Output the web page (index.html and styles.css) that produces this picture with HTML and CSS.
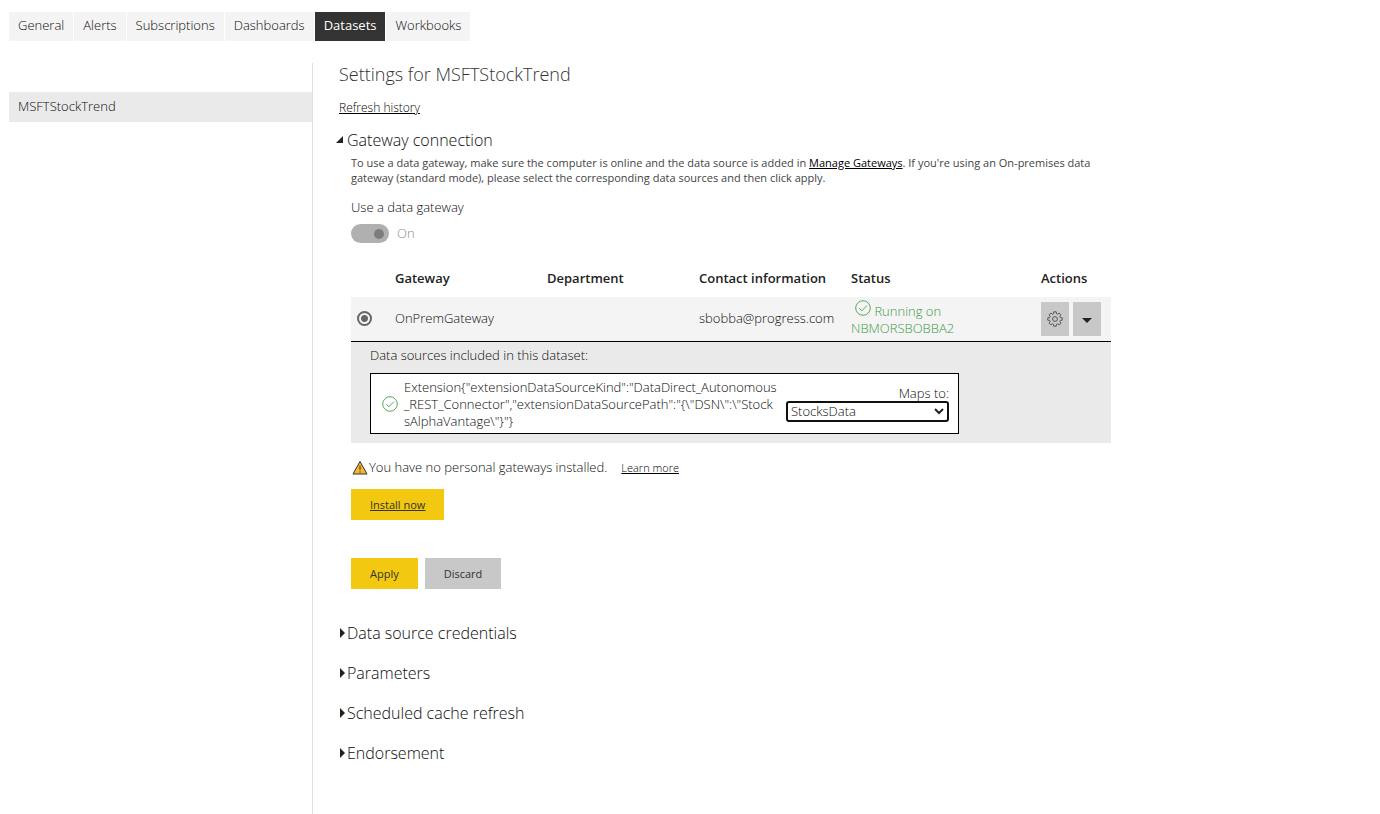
FILE: index.html
```html
<!DOCTYPE html>
<html lang="en">
<head>
  <meta charset="UTF-8">
  <meta name="viewport" content="width=device-width, initial-scale=1.0">
  <title>Settings</title>
  <link rel="stylesheet" href="styles.css">
</head>
<body>
  <nav class="tabs">
    <button type="button" class="tab">General</button>
    <button type="button" class="tab">Alerts</button>
    <button type="button" class="tab">Subscriptions</button>
    <button type="button" class="tab">Dashboards</button>
    <button type="button" class="tab active">Datasets</button>
    <button type="button" class="tab">Workbooks</button>
  </nav>

  <div class="layout">
    <aside class="sidebar">
      <a href="#" class="sidebar-item">MSFTStockTrend</a>
    </aside>

    <main class="content">
      <h1>Settings for MSFTStockTrend</h1>
      <a href="#" class="history-link">Refresh history</a>

      <section class="section">
        <h2><button type="button" class="section-toggle" aria-expanded="true">
          <svg class="arrow" viewBox="0 0 11 10"><path d="M7 1v7H0z"/></svg>Gateway connection</button></h2>

        <div class="section-body">
          <p class="help">To use a data gateway, make sure the computer is online and the data source is added in <a href="#">Manage Gateways</a>. If you're using an On-premises data gateway (standard mode), please select the corresponding data sources and then click apply.</p>

          <label class="label" for="use-gateway">Use a data gateway</label>
          <div class="switch-row">
            <input type="checkbox" class="switch" id="use-gateway" checked disabled>
            <span>On</span>
          </div>

          <table class="gateways">
            <thead>
              <tr>
                <th class="col-pick"></th>
                <th class="col-text">Gateway</th>
                <th class="col-text">Department</th>
                <th class="col-text">Contact information</th>
                <th class="col-status">Status</th>
                <th>Actions</th>
              </tr>
            </thead>
            <tbody>
              <tr class="gateway-row">
                <td class="pick"><input type="radio" class="radio" name="gateway" id="gateway-1" aria-label="OnPremGateway" checked></td>
                <td><label for="gateway-1">OnPremGateway</label></td>
                <td></td>
                <td>sbobba@progress.com</td>
                <td class="status">
                  <svg class="check" viewBox="0 0 16 16"><circle cx="8" cy="8" r="7.3"/><path d="M4.3 8.2l2.6 2.6 5-5.2"/></svg>
                  Running on<br>NBMORSBOBBA2
                </td>
                <td>
                  <div class="actions">
                    <button type="button" class="icon-btn" aria-label="Settings">
                      <svg class="gear" viewBox="0 0 16 16"><path d="M6.8.8h2.4l.3 1.9 1.2.5 1.5-1.1 1.7 1.7-1.1 1.5.5 1.2 1.9.3v2.4l-1.9.3-.5 1.2 1.1 1.5-1.7 1.7-1.5-1.1-1.2.5-.3 1.9H6.8l-.3-1.9-1.2-.5-1.5 1.1-1.7-1.7 1.1-1.5-.5-1.2-1.9-.3V6.8l1.9-.3.5-1.2-1.1-1.5 1.7-1.7 1.5 1.1 1.2-.5z"/><circle cx="8" cy="8" r="2.4"/></svg>
                    </button>
                    <button type="button" class="icon-btn" aria-label="Show data sources">
                      <svg class="caret" viewBox="0 0 10 5"><path d="M0 0h10L5 5z"/></svg>
                    </button>
                  </div>
                </td>
              </tr>
              <tr class="sources-row">
                <td colspan="6">
                  <p>Data sources included in this dataset:</p>
                  <div class="source">
                    <svg class="check" viewBox="0 0 16 16"><circle cx="8" cy="8" r="7.3"/><path d="M4.3 8.2l2.6 2.6 5-5.2"/></svg>
                    <div class="source-name">Extension{"extensionDataSourceKind":"DataDirect_Autonomous<wbr>_REST_Connector","extensionDataSourcePath":"{\"DSN\":\"Stock<wbr>sAlphaVantage\"}"}</div>
                    <div class="maps">
                      <label for="maps-to">Maps to:</label>
                      <div class="select-wrap">
                        <select id="maps-to">
                          <option>StocksData</option>
                        </select>
                        <svg class="chevron" viewBox="0 0 10 7"><path d="M1 1l4 4 4-4"/></svg>
                      </div>
                    </div>
                  </div>
                </td>
              </tr>
            </tbody>
          </table>

          <div class="notice">
            <svg class="warning" viewBox="0 0 16 15"><path class="sign" d="M8 1.5L15 14H1z"/><path class="mark" d="M8 5.5v4.5M8 11.3v1.4"/></svg>
            <span>You have no personal gateways installed.</span>
            <a href="#">Learn more</a>
          </div>
          <a href="#" class="btn btn-primary install">Install now</a>

          <div class="buttons">
            <button type="button" class="btn btn-primary">Apply</button>
            <button type="button" class="btn">Discard</button>
          </div>
        </div>
      </section>

      <div class="collapsed">
        <h2><button type="button" class="section-toggle" aria-expanded="false">
          <svg class="arrow" viewBox="0 0 11 10"><path d="M4 0l5 5-5 5z"/></svg>Data source credentials</button></h2>
        <h2><button type="button" class="section-toggle" aria-expanded="false">
          <svg class="arrow" viewBox="0 0 11 10"><path d="M4 0l5 5-5 5z"/></svg>Parameters</button></h2>
        <h2><button type="button" class="section-toggle" aria-expanded="false">
          <svg class="arrow" viewBox="0 0 11 10"><path d="M4 0l5 5-5 5z"/></svg>Scheduled cache refresh</button></h2>
        <h2><button type="button" class="section-toggle" aria-expanded="false">
          <svg class="arrow" viewBox="0 0 11 10"><path d="M4 0l5 5-5 5z"/></svg>Endorsement</button></h2>
      </div>
    </main>
  </div>
</body>
</html>
```
FILE: styles.css
```css
:root {
  --text: #333333;
  --dark: #0c0c0c;
  --light-bg: #f4f4f4;
  --grey-bg: #eaeaea;
  --button: #c8c8c8;
  --yellow: #f2c811;
  --green: #3f9a46;
}

* {
  box-sizing: border-box;
}

body {
  margin: 0;
  padding: 12px 0 0 9px;
  min-height: 100vh;
  display: flex;
  flex-direction: column;
  background: #ffffff;
  color: var(--dark);
  font-family: "Open Sans", "Noto Sans", sans-serif;
  font-size: 13px;
  font-weight: 300;
  line-height: 17px;
}

button,
select {
  font: inherit;
  color: inherit;
}

button {
  border: none;
  cursor: pointer;
}

h1,
h2,
p {
  margin: 0;
}

a {
  color: #000000;
}

.tabs {
  display: flex;
  gap: 1px;
}

.tab {
  padding: 5px 9px 7px;
  background: var(--light-bg);
}

.tab.active {
  background: var(--text);
  color: #ffffff;
  font-weight: 400;
}

.layout {
  display: flex;
  flex: 1;
  margin-top: 22px;
}

.sidebar {
  width: 304px;
  flex-shrink: 0;
  padding-top: 29px;
  border-right: 1px solid #e0e0e0;
}

.sidebar-item {
  display: block;
  padding: 6px 9px 7px;
  background: var(--grey-bg);
  color: var(--dark);
  text-decoration: none;
}

.content {
  flex: 1;
  padding: 0 26px;
}

h1 {
  color: var(--text);
  font-size: 18px;
  font-weight: 300;
  line-height: 22px;
}

.history-link {
  display: block;
  width: max-content;
  margin-top: 14px;
  font-size: 12px;
}

.section {
  margin-top: 14px;
}

h2 {
  font-size: 16px;
  font-weight: 300;
  line-height: 20px;
}

.section-toggle {
  display: flex;
  align-items: center;
  margin-left: -3px;
  padding: 0;
  background: none;
}

.arrow {
  width: 11px;
  height: 10px;
  fill: #222222;
}

.section-body {
  max-width: 772px;
  padding: 5px 0 0 12px;
}

.help {
  max-width: 745px;
  color: #444444;
  font-size: 11px;
  font-weight: 400;
  line-height: 15px;
}

.label {
  display: block;
  margin-top: 14px;
}

.switch-row {
  display: flex;
  align-items: center;
  gap: 8px;
  margin-top: 8px;
  color: #8c8c8c;
}

.switch {
  appearance: none;
  display: flex;
  align-items: center;
  justify-content: flex-end;
  width: 38px;
  height: 19px;
  margin: 0;
  padding-right: 5px;
  border-radius: 10px;
  background: #b0b0b0;
}

.switch::before {
  content: "";
  width: 10px;
  height: 10px;
  border-radius: 50%;
  background: #7d7d7d;
}

.gateways {
  width: 100%;
  margin-top: 16px;
  table-layout: fixed;
  border-collapse: collapse;
  text-align: left;
}

.gateways th {
  height: 38px;
  padding: 0;
  color: #222222;
  font-weight: 600;
}

.gateways td {
  padding: 0;
}

.col-pick {
  width: 44px;
}

.col-text {
  width: 20%;
}

.col-status {
  width: 25%;
}

.gateway-row {
  height: 44px;
  background: var(--light-bg);
  border-bottom: 1px solid #000000;
}

.pick {
  line-height: 0;
}

.radio {
  appearance: none;
  width: 15px;
  height: 15px;
  margin: 0 0 0 6px;
  border: 2px solid #666666;
  border-radius: 50%;
  background: radial-gradient(circle, #666666 3px, transparent 4px);
}

.status {
  color: var(--green);
}

.check {
  width: 16px;
  height: 16px;
  flex-shrink: 0;
  fill: none;
  stroke: #5aa860;
}

.status .check {
  margin-left: 4px;
}

.actions {
  display: flex;
  gap: 4px;
}

.icon-btn {
  display: flex;
  align-items: center;
  justify-content: center;
  width: 28px;
  height: 34px;
  padding: 0;
  background: var(--button);
}

.gear {
  width: 16px;
  height: 16px;
  fill: none;
  stroke: #555555;
}

.caret {
  width: 10px;
  height: 5px;
  margin-top: 4px;
  fill: #222222;
}

.sources-row {
  background: var(--grey-bg);
}

.gateways .sources-row td {
  padding: 5px 19px 9px;
}

.source {
  display: flex;
  align-items: center;
  width: 589px;
  max-width: 100%;
  margin-top: 9px;
  padding: 5px 9px 3px 11px;
  border: 1px solid #000000;
  background: #ffffff;
}

.source-name {
  flex: 1;
  margin-left: 6px;
}

.maps {
  display: flex;
  flex-direction: column;
  flex-shrink: 0;
  width: 163px;
  line-height: 15px;
  text-align: right;
}

.select-wrap {
  display: flex;
  align-items: center;
  position: relative;
}

.select-wrap select {
  appearance: none;
  width: 100%;
  height: 21px;
  padding: 0 3px;
  border: 2px solid #101010;
  border-radius: 3px;
  background: #ffffff;
  line-height: 17px;
}

.chevron {
  position: absolute;
  right: 5px;
  width: 10px;
  height: 7px;
  fill: none;
  stroke: #222222;
  stroke-width: 2;
  pointer-events: none;
}

.notice {
  display: flex;
  align-items: center;
  margin-top: 16px;
}

.notice a {
  margin-left: 14px;
  font-size: 11px;
}

.warning {
  width: 16px;
  height: 15px;
  margin: 0 1px;
}

.sign {
  fill: #f5b82e;
  stroke: #333333;
}

.mark {
  fill: none;
  stroke: #333333;
}

.btn {
  padding: 8px 19px;
  background: var(--button);
  color: var(--text);
  font-size: 11px;
  font-weight: 400;
  line-height: 15px;
}

.btn-primary {
  background: var(--yellow);
}

.install {
  display: block;
  width: max-content;
  margin-top: 13px;
}

.buttons {
  display: flex;
  gap: 7px;
  margin-top: 38px;
}

.collapsed {
  display: flex;
  flex-direction: column;
  gap: 20px;
  margin-top: 34px;
}
```
